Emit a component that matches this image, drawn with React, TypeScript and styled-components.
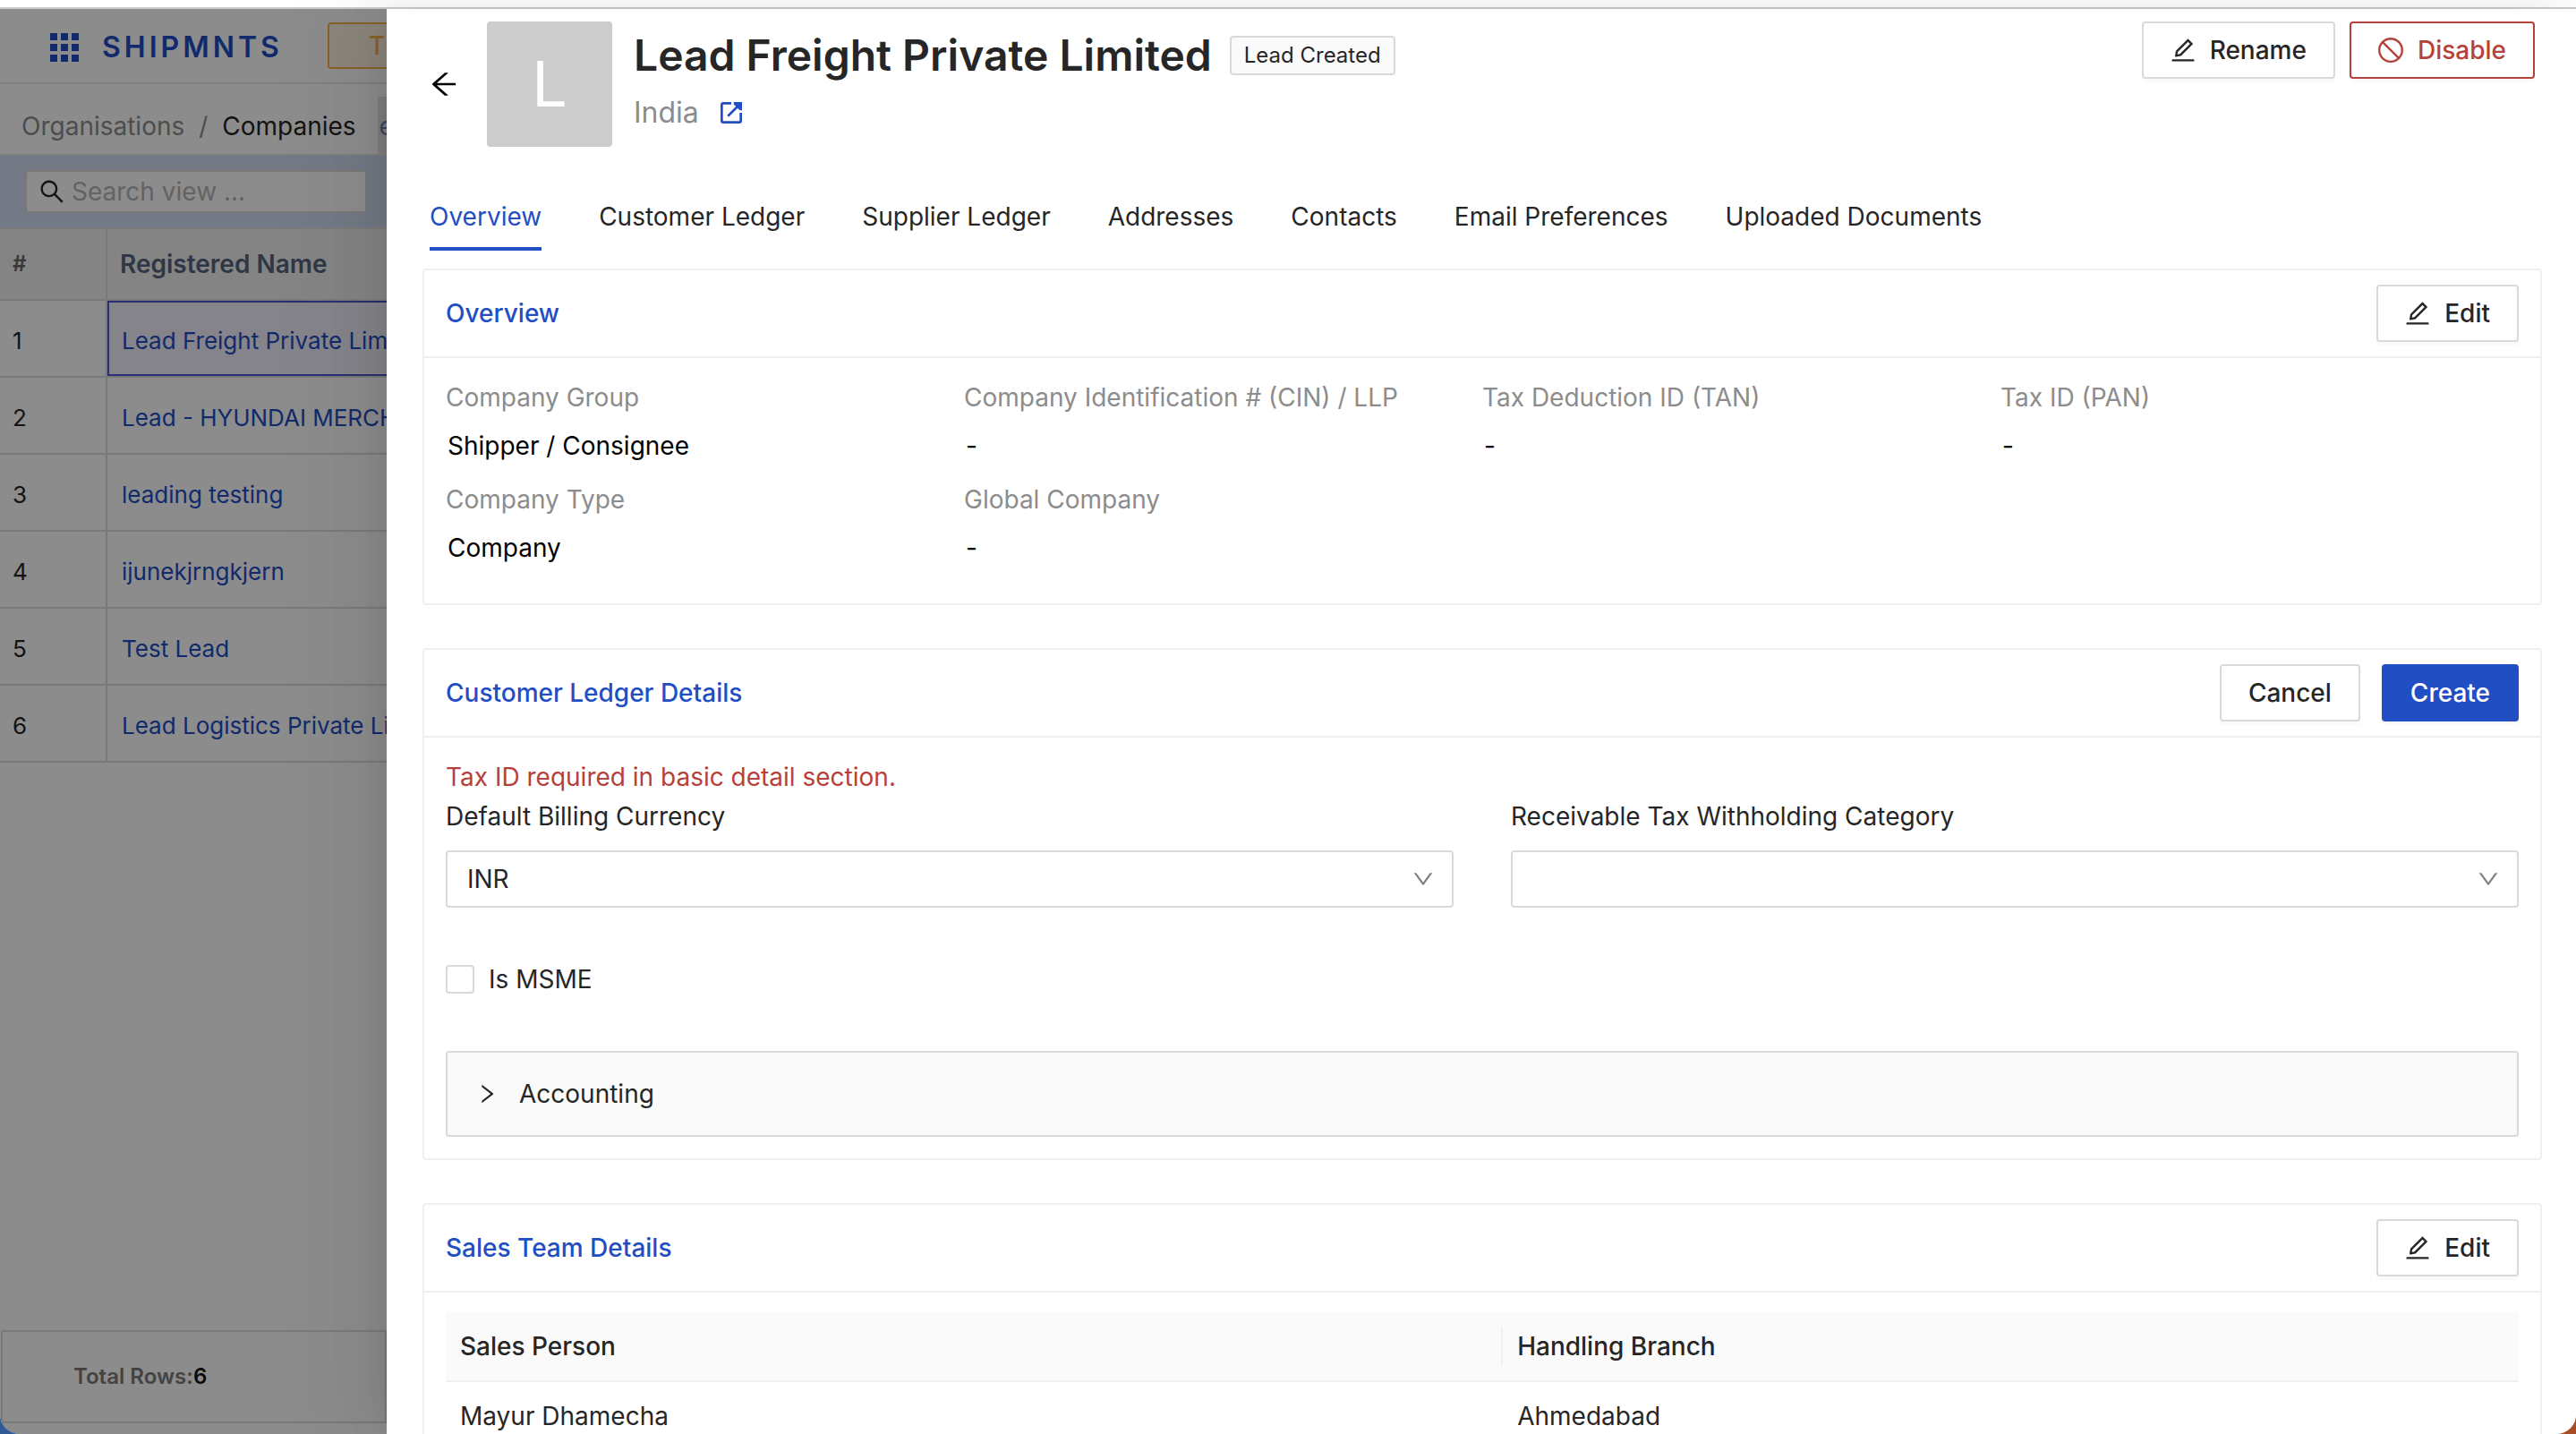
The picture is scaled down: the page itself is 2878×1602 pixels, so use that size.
import React, { useState } from "react";
import styled, { createGlobalStyle } from "styled-components";
import type { IconType } from "react-icons";
import {
  AiOutlineArrowLeft,
  AiOutlineDown,
  AiOutlineEdit,
  AiOutlineRight,
  AiOutlineSearch,
  AiOutlineStop,
} from "react-icons/ai";

const c = {
  brand: "#224ec4",
  danger: "#b5423a",
  text: "#262626",
  muted: "#8c8c8c",
  line: "#f0f0f0",
  control: "#d9d9d9",
  gridLine: "#dcdcdc",
  surface: "#fafafa",
};

const GlobalStyle = createGlobalStyle`
  *, *::before, *::after { box-sizing: border-box; }
  body {
    margin: 0;
    font-family: Inter, "Liberation Sans", sans-serif;
    font-size: 28px;
    line-height: 44px;
    color: ${c.text};
    background: #fff;
  }
  h1, h2, p, dl, dd { margin: 0; font-weight: inherit; font-size: inherit; }
  button, input, select { font: inherit; color: inherit; margin: 0; }
  button { cursor: pointer; }
  a { color: inherit; text-decoration: none; }
`;

/* ---------- window ---------- */

const Desktop = styled.div`
  height: 100vh;
  overflow: hidden;
  background: linear-gradient(90deg, #2f5a94 0 50%, #a84c26 50%);
`;

const Window = styled.div`
  height: 100%;
  display: flex;
  flex-direction: column;
  overflow: hidden;
  background: #fff;
  border-radius: 0 0 22px 22px;
`;

const TitleStrip = styled.div`
  flex: none;
  height: 10px;
  border-bottom: 2px solid #cccccc;
`;

const Workspace = styled.div`
  flex: 1;
  min-height: 0;
  display: grid;
  grid-template-columns: 432px minmax(0, 1fr);
`;

/* ---------- dimmed page behind the drawer ---------- */

const Backdrop = styled.div`
  position: relative;
  min-width: 0;
  overflow: hidden;
  display: flex;
  flex-direction: column;
  white-space: nowrap;

  &::after {
    content: "";
    position: absolute;
    inset: 0;
    background: rgba(0, 0, 0, 0.45);
  }
`;

const BrandBar = styled.header`
  flex: none;
  height: 84px;
  display: flex;
  align-items: center;
  padding-left: 56px;
  border-bottom: 2px solid #e4e4f0;
`;

const Brand = styled.div`
  flex: none;
  width: 310px;
  display: flex;
  align-items: center;
  gap: 26px;
  padding-top: 4px;
`;

const Wordmark = styled.span`
  font-size: 32px;
  font-weight: 600;
  letter-spacing: 4px;
  color: ${c.brand};
`;

const TrialTag = styled.span`
  flex: none;
  width: 200px;
  height: 52px;
  display: flex;
  align-items: center;
  padding-left: 44px;
  border: 2px solid #f7b24a;
  border-radius: 4px;
  background: #fff3e2;
  color: #f7b24a;
  font-weight: 500;
`;

const CrumbBar = styled.nav`
  flex: none;
  height: 80px;
  display: flex;
  align-items: flex-end;
  padding-left: 24px;
  border-bottom: 2px solid #e4e4e4;
`;

const Crumb = styled.a<{ $current?: boolean }>`
  flex: none;
  line-height: 62px;
  color: ${(p) => (p.$current ? c.text : c.muted)};
`;

const Slash = styled.span`
  flex: none;
  width: 42px;
  text-align: center;
  line-height: 62px;
  color: ${c.muted};
`;

const ViewTab = styled.span`
  flex: none;
  margin-left: 24px;
  width: 60px;
  padding: 2px 0 0 2px;
  line-height: 62px;
  background: #e4e4e4;
  color: #6e7fb0;
`;

const SearchBand = styled.div`
  flex: none;
  height: 82px;
  display: flex;
  align-items: center;
  padding-left: 28px;
  background: #d2ddf3;
  border-bottom: 2px solid #e0e0e0;
`;

const SearchBox = styled.label`
  width: 382px;
  height: 48px;
  display: flex;
  align-items: center;
  gap: 8px;
  padding-left: 14px;
  border: 2px solid #dddad6;
  border-radius: 4px;
  background: #fff;
`;

const SearchInput = styled.input`
  flex: 1;
  min-width: 0;
  height: 44px;
  padding: 0;
  border: 0;
  outline: 0;
  background: none;

  &::placeholder {
    color: #b4b4b4;
    opacity: 1;
  }
`;

const CompanyTable = styled.table`
  flex: none;
  width: 600px;
  table-layout: fixed;
  border-collapse: separate;
  border-spacing: 0;
  text-align: left;
  font-size: 26px;

  th,
  td {
    height: 86px;
    padding: 6px 0 0 14px;
    border-bottom: 2px solid ${c.gridLine};
  }
  th {
    height: 80px;
    padding-top: 0;
    background: #f0f0f0;
    font-size: 28px;
    font-weight: 600;
    color: #55657f;
  }
  th:first-child {
    width: 120px;
    font-size: 24px;
    color: #666;
  }
  th:first-child,
  td:first-child {
    border-right: 2px solid ${c.gridLine};
  }
  td:last-child {
    padding-left: 16px;
  }
`;

const NameCell = styled.td<{ $selected: boolean }>`
  color: ${c.brand};
  ${(p) =>
    p.$selected &&
    `background: #f2f0fb; box-shadow: inset 0 0 0 2px #4c57cc;`}
`;

const RowsFooter = styled.footer`
  flex: none;
  height: 104px;
  display: flex;
  align-items: center;
  margin: auto 0 12px 1px;
  padding-left: 79px;
  border: 2px solid ${c.gridLine};
  font-size: 24px;
  font-weight: 600;
  color: #7a7a7a;

  strong {
    font-weight: 600;
    color: #111;
  }
`;

/* ---------- drawer ---------- */

const Drawer = styled.main`
  position: relative;
  min-width: 0;
  overflow: hidden;
  background: #fff;
  box-shadow:
    -12px 0 32px -16px rgba(0, 0, 0, 0.08),
    -18px 0 56px rgba(0, 0, 0, 0.05),
    -24px 0 96px 32px rgba(0, 0, 0, 0.03);
`;

const DrawerHeader = styled.header`
  display: flex;
  align-items: flex-start;
  padding: 14px 46px 0 48px;
`;

const BackButton = styled.button`
  align-self: center;
  display: flex;
  margin-right: 32px;
  padding: 0;
  border: 0;
  background: none;
  color: #000;
`;

const Avatar = styled.div`
  width: 140px;
  height: 140px;
  margin-right: 24px;
  border-radius: 4px;
  background: #cccccc;
  color: #fff;
  font-size: 70px;
  line-height: 140px;
  text-align: center;
`;

const Heading = styled.div`
  flex: 1;
`;

const TitleRow = styled.div`
  display: flex;
  align-items: center;
  gap: 20px;
`;

const Title = styled.h1`
  font-size: 48px;
  font-weight: 600;
  line-height: 76px;
`;

const Tag = styled.span`
  height: 44px;
  padding: 0 14px;
  border: 2px solid ${c.control};
  border-radius: 4px;
  background: ${c.surface};
  font-size: 24px;
  line-height: 40px;
`;

const Country = styled.p`
  display: flex;
  align-items: center;
  gap: 24px;
  font-size: 32px;
  line-height: 52px;
  color: ${c.muted};

  a {
    display: flex;
    color: ${c.brand};
  }
`;

const Actions = styled.div<{ $gap: number }>`
  display: flex;
  gap: ${(p) => p.$gap}px;
`;

type Tone = "default" | "primary" | "danger";

const tones: Record<Tone, string> = {
  default: `border-color: ${c.control}; background: #fff;`,
  primary: `border-color: ${c.brand}; background: ${c.brand}; color: #fff;`,
  danger: `border-color: ${c.danger}; background: #fff; color: ${c.danger};`,
};

const Button = styled.button<{ $tone?: Tone }>`
  height: 64px;
  display: flex;
  align-items: center;
  gap: 16px;
  padding: 0 30px;
  border: 2px solid;
  border-radius: 4px;
  font-weight: 500;
  box-shadow: 0 4px 0 rgba(0, 0, 0, 0.02);
  ${(p) => tones[p.$tone ?? "default"]}
`;

const TabBar = styled.div`
  display: flex;
  gap: 64px;
  padding: 40px 48px 20px;
`;

const Tab = styled.button<{ $active: boolean }>`
  height: 76px;
  padding: 4px 0 0;
  border: 0;
  border-bottom: 4px solid ${(p) => (p.$active ? c.brand : "transparent")};
  background: none;
  color: ${(p) => (p.$active ? c.brand : c.text)};
`;

const Card = styled.section`
  margin: 0 38px 48px 40px;
  border: 2px solid ${c.line};
  border-radius: 4px;
`;

const CardHead = styled.div`
  height: 98px;
  display: flex;
  align-items: center;
  justify-content: space-between;
  padding: 0 24px;
  border-bottom: 2px solid ${c.line};
`;

const CardTitle = styled.h2`
  font-weight: 500;
  color: ${c.brand};
`;

const CardBody = styled.div`
  padding: 22px 24px 24px;
`;

const Facts = styled.dl`
  display: grid;
  grid-template-columns: repeat(4, 1fr);
`;

const Fact = styled.div`
  padding-bottom: 16px;

  dt {
    color: ${c.muted};
  }
  dd {
    margin-top: 10px;
    padding-left: 2px;
    color: #000;
  }
`;

const ErrorText = styled.p`
  color: ${c.danger};
`;

const FieldRow = styled.div`
  display: grid;
  grid-template-columns: 1fr 1fr;
  gap: 64px;
`;

const Field = styled.label`
  display: flex;
  flex-direction: column;
  gap: 16px;
`;

const SelectShell = styled.span`
  display: grid;
  align-items: center;

  select,
  svg {
    grid-area: 1 / 1;
  }
  svg {
    justify-self: end;
    margin-right: 22px;
    color: #808080;
    pointer-events: none;
  }
`;

const Select = styled.select`
  appearance: none;
  width: 100%;
  height: 64px;
  padding: 0 22px;
  border: 2px solid ${c.control};
  border-radius: 4px;
  background: #fff;
`;

const CheckLabel = styled.label`
  display: flex;
  align-items: center;
  gap: 16px;
  padding: 58px 0;
`;

const Checkbox = styled.input`
  appearance: none;
  width: 32px;
  height: 32px;
  border: 2px solid ${c.control};
  border-radius: 4px;
  background: #fff;

  &:checked {
    border-color: ${c.brand};
    background: ${c.brand};
  }
`;

const Collapse = styled.button`
  width: 100%;
  height: 96px;
  display: flex;
  align-items: center;
  gap: 24px;
  padding: 0 32px;
  border: 2px solid ${c.control};
  border-radius: 4px;
  background: ${c.surface};
`;

const TeamTable = styled.table`
  width: 100%;
  table-layout: fixed;
  border-collapse: separate;
  border-spacing: 0;
  text-align: left;

  th,
  td {
    height: 78px;
    padding: 0 16px;
    border-bottom: 2px solid ${c.line};
  }
  th {
    background: ${c.surface};
    font-weight: 500;
  }
  th:first-child {
    width: 51%;
    background: linear-gradient(${c.line}, ${c.line}) right center / 2px 44px
      no-repeat ${c.surface};
    border-top-left-radius: 4px;
  }
  th:last-child {
    border-top-right-radius: 4px;
  }
`;

/* ---------- drawings ---------- */

/* Trims the blank rim of the 1024-unit glyphs so that they fill their box. */
const Icon = ({ as: Glyph, size = 28 }: { as: IconType; size?: number }) => (
  <Glyph viewBox="64 64 896 896" size={size} aria-hidden="true" />
);

const AppsIcon = () => (
  <svg width="32" height="32" viewBox="0 0 32 32" fill={c.brand} aria-hidden="true">
    {[0, 12, 24].map((y) =>
      [0, 12, 24].map((x) => <rect key={`${x}-${y}`} x={x} y={y} width="8" height="8" />)
    )}
  </svg>
);

const OpenIcon = () => (
  <svg width="24" height="24" viewBox="0 0 24 24" fill="none" stroke="currentColor" strokeWidth="2.7" aria-hidden="true">
    <path d="M12 1.35H3Q1.35 1.35 1.35 3V21Q1.35 22.65 3 22.65H21Q22.65 22.65 22.65 21V12" />
    <path d="M8.2 15.8L21.5 2.5" />
    <path d="M14.7 0H24V9.3H21.6L14.7 2.4Z" fill="currentColor" stroke="none" />
  </svg>
);

/* ---------- data ---------- */

const companies = [
  "Lead Freight Private Limited",
  "Lead - HYUNDAI MERCHANT",
  "leading testing",
  "ijunekjrngkjern",
  "Test Lead",
  "Lead Logistics Private Limited",
];

const tabs = [
  "Overview",
  "Customer Ledger",
  "Supplier Ledger",
  "Addresses",
  "Contacts",
  "Email Preferences",
  "Uploaded Documents",
];

const facts: [string, string][] = [
  ["Company Group", "Shipper / Consignee"],
  ["Company Identification # (CIN) / LLP", "-"],
  ["Tax Deduction ID (TAN)", "-"],
  ["Tax ID (PAN)", "-"],
  ["Company Type", "Company"],
  ["Global Company", "-"],
];

const EditButton = () => (
  <Button type="button">
    <Icon as={AiOutlineEdit} />
    Edit
  </Button>
);

const CompaniesPage = () => (
  <Backdrop>
    <BrandBar>
      <Brand>
        <AppsIcon />
        <Wordmark>SHIPMNTS</Wordmark>
      </Brand>
      <TrialTag>T</TrialTag>
    </BrandBar>
    <CrumbBar aria-label="Breadcrumb">
      <Crumb href="#organisations">Organisations</Crumb>
      <Slash>/</Slash>
      <Crumb href="#companies" $current>
        Companies
      </Crumb>
      <ViewTab>e</ViewTab>
    </CrumbBar>
    <SearchBand>
      <SearchBox>
        <Icon as={AiOutlineSearch} />
        <SearchInput type="text" placeholder="Search view ..." aria-label="Search view" />
      </SearchBox>
    </SearchBand>
    <CompanyTable>
      <thead>
        <tr>
          <th scope="col">#</th>
          <th scope="col">Registered Name</th>
        </tr>
      </thead>
      <tbody>
        {companies.map((name, i) => (
          <tr key={name}>
            <td>{i + 1}</td>
            <NameCell $selected={i === 0}>
              <a href={`#company-${i + 1}`}>{name}</a>
            </NameCell>
          </tr>
        ))}
      </tbody>
    </CompanyTable>
    <RowsFooter>
      Total Rows:<strong>{companies.length}</strong>
    </RowsFooter>
  </Backdrop>
);

export default function App() {
  const [tab, setTab] = useState(tabs[0]);

  return (
    <>
      <GlobalStyle />
      <Desktop>
        <Window>
          <TitleStrip />
          <Workspace>
            <CompaniesPage />
            <Drawer>
              <DrawerHeader>
                <BackButton type="button" aria-label="Back">
                  <Icon as={AiOutlineArrowLeft} size={32} />
                </BackButton>
                <Avatar>L</Avatar>
                <Heading>
                  <TitleRow>
                    <Title>Lead Freight Private Limited</Title>
                    <Tag>Lead Created</Tag>
                  </TitleRow>
                  <Country>
                    India
                    <a href="#company-1" aria-label="Open company">
                      <OpenIcon />
                    </a>
                  </Country>
                </Heading>
                <Actions $gap={16}>
                  <Button type="button">
                    <Icon as={AiOutlineEdit} />
                    Rename
                  </Button>
                  <Button type="button" $tone="danger">
                    <Icon as={AiOutlineStop} />
                    Disable
                  </Button>
                </Actions>
              </DrawerHeader>

              <TabBar role="tablist">
                {tabs.map((name) => (
                  <Tab
                    key={name}
                    type="button"
                    role="tab"
                    aria-selected={name === tab}
                    $active={name === tab}
                    onClick={() => setTab(name)}
                  >
                    {name}
                  </Tab>
                ))}
              </TabBar>

              <Card>
                <CardHead>
                  <CardTitle>Overview</CardTitle>
                  <EditButton />
                </CardHead>
                <CardBody>
                  <Facts>
                    {facts.map(([label, value]) => (
                      <Fact key={label}>
                        <dt>{label}</dt>
                        <dd>{value}</dd>
                      </Fact>
                    ))}
                  </Facts>
                </CardBody>
              </Card>

              <Card>
                <CardHead>
                  <CardTitle>Customer Ledger Details</CardTitle>
                  <Actions $gap={24}>
                    <Button type="button">Cancel</Button>
                    <Button type="button" $tone="primary">
                      Create
                    </Button>
                  </Actions>
                </CardHead>
                <CardBody>
                  <ErrorText>Tax ID required in basic detail section.</ErrorText>
                  <FieldRow>
                    <Field>
                      Default Billing Currency
                      <SelectShell>
                        <Select defaultValue="INR">
                          <option>INR</option>
                        </Select>
                        <Icon as={AiOutlineDown} size={24} />
                      </SelectShell>
                    </Field>
                    <Field>
                      Receivable Tax Withholding Category
                      <SelectShell>
                        <Select defaultValue="">
                          <option value=""></option>
                        </Select>
                        <Icon as={AiOutlineDown} size={24} />
                      </SelectShell>
                    </Field>
                  </FieldRow>
                  <CheckLabel>
                    <Checkbox type="checkbox" />
                    Is MSME
                  </CheckLabel>
                  <Collapse type="button" aria-expanded={false}>
                    <Icon as={AiOutlineRight} size={24} />
                    Accounting
                  </Collapse>
                </CardBody>
              </Card>

              <Card>
                <CardHead>
                  <CardTitle>Sales Team Details</CardTitle>
                  <EditButton />
                </CardHead>
                <CardBody>
                  <TeamTable>
                    <thead>
                      <tr>
                        <th scope="col">Sales Person</th>
                        <th scope="col">Handling Branch</th>
                      </tr>
                    </thead>
                    <tbody>
                      <tr>
                        <td>Mayur Dhamecha</td>
                        <td>Ahmedabad</td>
                      </tr>
                    </tbody>
                  </TeamTable>
                </CardBody>
              </Card>
            </Drawer>
          </Workspace>
        </Window>
      </Desktop>
    </>
  );
}
